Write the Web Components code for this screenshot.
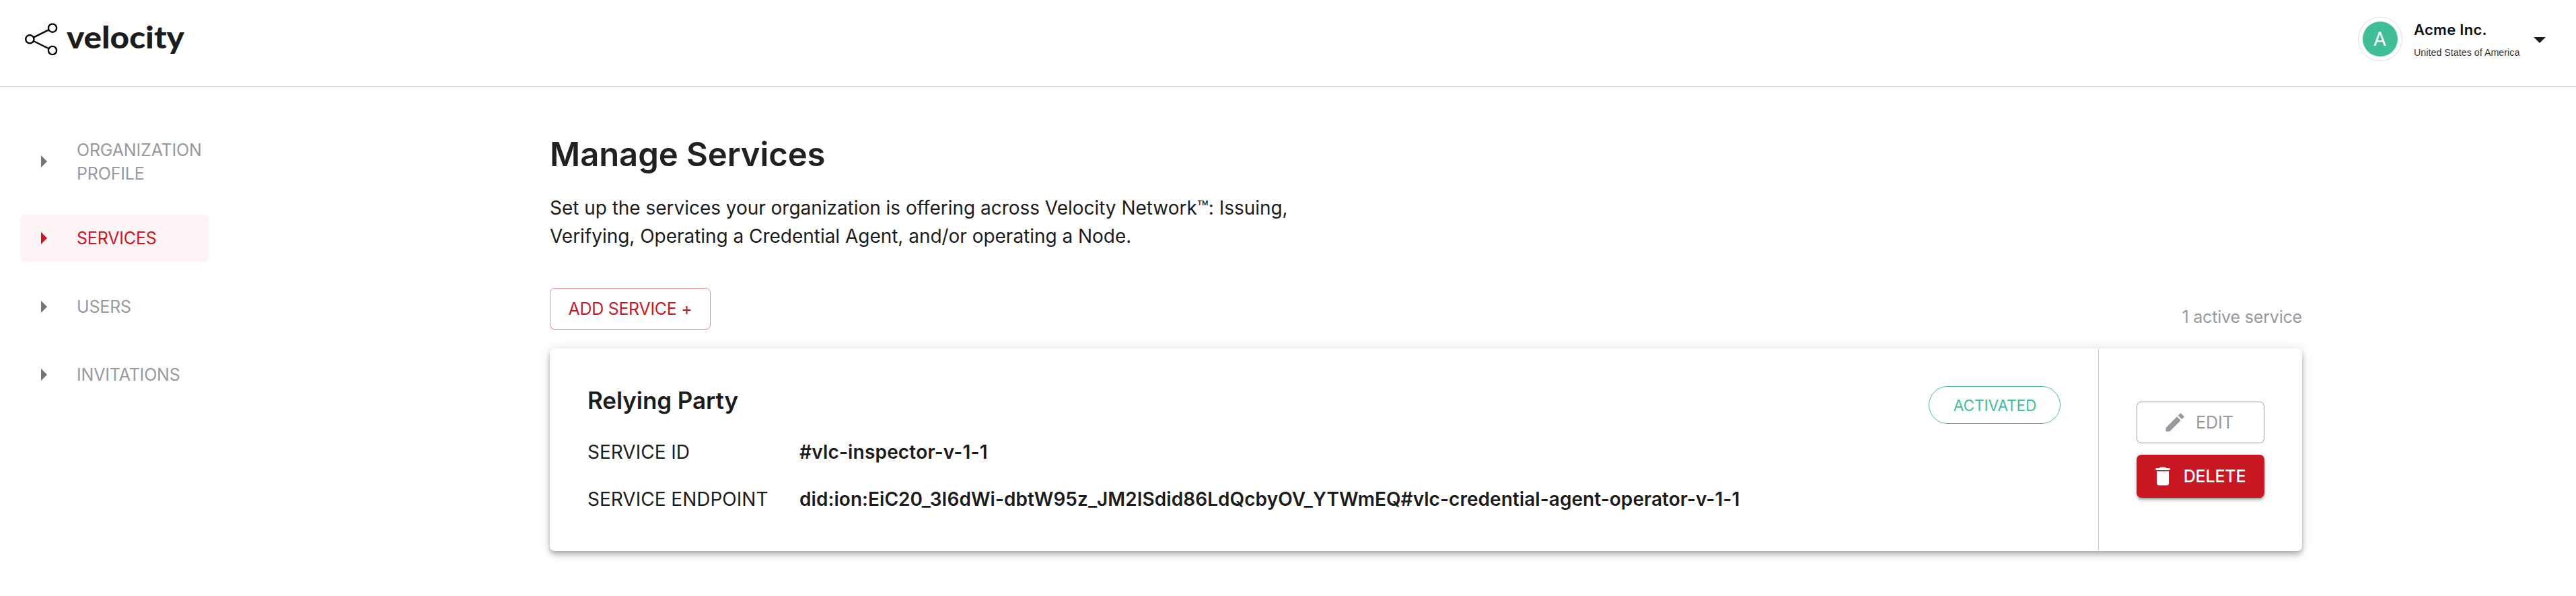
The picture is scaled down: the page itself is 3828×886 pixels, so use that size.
<!DOCTYPE html>
<html lang="en">
<head>
<meta charset="utf-8">
<title>Manage Services</title>
<style>
  html, body { margin: 0; background: #fff; }
  body { font-family: Inter, "Liberation Sans", sans-serif; color: #1c1c1c; min-height: 886px; overflow: hidden; }
</style>
</head>
<body>
<app-shell>
  <brand-logo slot="header"></brand-logo>
  <account-menu slot="header" initial="A">Acme Inc.<span slot="country">United States of America</span></account-menu>
  <side-nav slot="nav">
    <nav-item tall>ORGANIZATION PROFILE</nav-item>
    <nav-item active>SERVICES</nav-item>
    <nav-item>USERS</nav-item>
    <nav-item>INVITATIONS</nav-item>
  </side-nav>
  <services-page>
    <span slot="title">Manage Services</span>
    <span slot="intro">Set up the services your organization is offering across Velocity Network™: Issuing,<br>Verifying, Operating a Credential Agent, and/or operating a Node.</span>
    <ui-button slot="action" kind="outline" style="width:239px;letter-spacing:-.32px">ADD SERVICE +</ui-button>
    <span slot="count">1 active service</span>
    <service-card>
      <span slot="name">Relying Party</span>
      <status-pill slot="status">ACTIVATED</status-pill>
      <service-field label="SERVICE ID" style="--value-spacing:.18px">#vlc-inspector-v-1-1</service-field>
      <service-field label="SERVICE ENDPOINT">did:ion:EiC20_3I6dWi-dbtW95z_JM2ISdid86LdQcbyOV_YTWmEQ#vlc-credential-agent-operator-v-1-1</service-field>
      <ui-button slot="actions" kind="muted" icon="edit">EDIT</ui-button>
      <ui-button slot="actions" kind="solid" icon="delete">DELETE</ui-button>
    </service-card>
  </services-page>
</app-shell>

<script>
const define = (name, html, setup) => customElements.define(name, class extends HTMLElement {
  connectedCallback() {
    if (this.shadowRoot) return;
    const root = this.attachShadow({ mode: 'open' });
    root.innerHTML = html;
    if (setup) setup(this, root);
  }
});

define('app-shell', `
<style>
  :host { display: block; }
  header { box-sizing: border-box; height: 129px; border-bottom: 1px solid #ced1d7; display: flex; justify-content: space-between; padding: 0 45px 0 36px; }
  .body { display: flex; align-items: flex-start; }
  .nav { width: 817px; flex: none; }
  main { width: 2604px; flex: none; }
</style>
<header><slot name="header"></slot></header>
<div class="body"><div class="nav"><slot name="nav"></slot></div><main><slot></slot></main></div>`);

define('brand-logo', `
<style>
  :host { display: flex; align-items: flex-start; }
  svg { margin-top: 33px; flex: none; }
  span { display: block; font: 900 46px/56px Lato, sans-serif; margin: 27px 0 0 12.5px; color: #1c1c1c; transform: scaleX(1.075); transform-origin: 0 50%; }
</style>
<svg width="50" height="50" viewBox="0 0 50 50" fill="none" stroke="#000" stroke-width="2.4">
  <circle cx="8.3" cy="25.3" r="6.1"/><circle cx="42" cy="8.7" r="6.1"/><circle cx="42" cy="42" r="6.1"/>
  <path d="M13.8 22.6 36.5 11.4M13.8 28 36.5 39.3"/>
</svg><span>velocity</span>`);

define('account-menu', `
<style>
  :host { display: flex; align-items: flex-start; }
  .ring { box-sizing: border-box; width: 66px; height: 66px; margin-top: 25px; border: 1px solid #dedede; border-radius: 50%; display: grid; place-items: center; }
  .disc { width: 52px; height: 52px; border-radius: 50%; background: #40be98; color: #fff; font: 400 29px/53px Roboto, sans-serif; text-align: center; }
  .text { width: 178px; margin: 31px 0 0 17.5px; display: flex; flex-direction: column; gap: 11px; }
  .name { font-size: 22px; line-height: 27px; font-weight: 600; letter-spacing: .3px; color: #111; }
  .country { font: 14.3px/18px "Liberation Sans", sans-serif; color: #333; white-space: nowrap; }
  svg { margin-top: 55px; }
</style>
<div class="ring"><div class="disc"></div></div>
<div class="text"><div class="name"><slot></slot></div><div class="country"><slot name="country"></slot></div></div>
<svg width="18" height="9" viewBox="0 0 18 9"><path d="M0 0H18L9 9Z" fill="#1c1c1c"/></svg>`,
(el, root) => { root.querySelector('.disc').textContent = el.getAttribute('initial'); });

define('side-nav', `
<style>
  :host { display: flex; flex-direction: column; gap: 31.6px; width: 280px; padding: 63.6px 0 0 30px; }
</style><slot></slot>`);

define('nav-item', `
<style>
  :host { display: flex; align-items: center; box-sizing: border-box; height: 70px; padding-left: 31px; border-radius: 7px; color: #98999e; fill: #757575; }
  :host([tall]) { height: 94.8px; }
  :host([active]) { background: #fcf3f4; color: #ca1823; fill: #ca1823; }
  svg { flex: none; margin-right: 44px; }
  span { font-size: 25px; line-height: 35px; letter-spacing: -.17px; width: 190px; padding-top: 1.5px; }
</style>
<svg width="9" height="18" viewBox="0 0 9 18"><path d="M0 0V18L9 9Z"/></svg><span><slot></slot></span>`);

define('services-page', `
<style>
  :host { display: block; padding-top: 71px; }
  h1 { margin: 0; font-size: 49px; line-height: 60px; font-weight: 600; letter-spacing: -.07px; color: #212121; }
  p { margin: 28px 0 0; font-size: 28px; line-height: 42.3px; height: 85px; letter-spacing: -.03px; }
  .bar { display: flex; justify-content: space-between; align-items: flex-end; margin: 55px 0 28px; }
  .count { font-size: 25px; line-height: 35px; letter-spacing: -.18px; color: #98999e; padding-bottom: 1px; }
</style>
<h1><slot name="title"></slot></h1>
<p><slot name="intro"></slot></p>
<div class="bar"><slot name="action"></slot><div class="count"><slot name="count"></slot></div></div>
<slot></slot>`);

define('ui-button', `
<style>
  :host { box-sizing: border-box; display: flex; align-items: center; justify-content: center; height: 62px; border-radius: 7px; border: 1px solid; font-size: 25px; line-height: 44px; white-space: nowrap; }
  :host([kind=outline]) { color: #ca1823; border-color: rgba(202,24,35,.5); padding-bottom: 1px; }
  :host([kind=muted]) { color: #98999e; border-color: #98999e; }
  :host([kind=solid]) { height: 64px; border: 0; background: #ca1823; color: #fff; font-weight: 500; letter-spacing: -.2px;
    box-shadow: 0 5.25px 1.75px -3.5px rgba(0,0,0,.2), 0 3.5px 3.5px rgba(0,0,0,.14), 0 1.75px 8.75px rgba(0,0,0,.12); }
  svg { width: 36px; height: 36px; fill: currentColor; margin: 0 13px 0 -7px; flex: none; }
</style><slot></slot>`,
(el, root) => {
  const icons = {
    edit: 'M3 17.25V21h3.75L17.81 9.94l-3.75-3.75L3 17.25zM20.71 7.04c.39-.39.39-1.02 0-1.41l-2.34-2.34a.9959.9959 0 0 0-1.41 0l-1.83 1.83 3.75 3.75 1.83-1.83z',
    delete: 'M6 19c0 1.1.9 2 2 2h8c1.1 0 2-.9 2-2V7H6v12zM19 4h-3.5l-1-1h-5l-1 1H5v2h14V4z'
  };
  const d = icons[el.getAttribute('icon')];
  if (d) root.querySelector('slot').insertAdjacentHTML('beforebegin', `<svg viewBox="0 0 24 24"><path d="${d}"/></svg>`);
});

define('service-card', `
<style>
  :host { display: flex; box-sizing: border-box; height: 301px; border-radius: 7px; background: #fff;
    box-shadow: 0 3.5px 7px -1.75px rgba(0,0,0,.2), 0 7px 8.75px rgba(0,0,0,.14), 0 1.75px 17.5px rgba(0,0,0,.12); }
  .info { flex: 1; box-sizing: border-box; padding: 56px; display: flex; justify-content: space-between; align-items: flex-start; }
  h2 { margin: 0 0 35px; font-size: 35px; line-height: 42px; font-weight: 600; letter-spacing: -.08px; }
  .fields { display: flex; flex-direction: column; gap: 27.6px; }
  .actions { box-sizing: border-box; width: 303px; border-left: 1px solid #ced1d7; padding: 0 56px; display: flex; flex-direction: column; justify-content: center; gap: 17px; }
</style>
<div class="info">
  <div><h2><slot name="name"></slot></h2><div class="fields"><slot></slot></div></div>
  <slot name="status"></slot>
</div>
<div class="actions"><slot name="actions"></slot></div>`);

define('service-field', `
<style>
  :host { display: flex; font-size: 28px; line-height: 42px; white-space: nowrap; }
  .label { width: 315px; }
  .value { font-weight: 600; letter-spacing: var(--value-spacing, .05px); }
</style><div class="label"></div><div class="value"><slot></slot></div>`,
(el, root) => { root.querySelector('.label').textContent = el.getAttribute('label'); });

define('status-pill', `
<style>
  :host { box-sizing: border-box; width: 196px; height: 56px; border: 1px solid #3fbf9b; border-radius: 28px; color: #3fbf9b; display: flex; align-items: center; justify-content: center; font-size: 22.75px; letter-spacing: -.15px; padding-left: 1px; }
</style><slot></slot>`);
</script>
</body>
</html>
